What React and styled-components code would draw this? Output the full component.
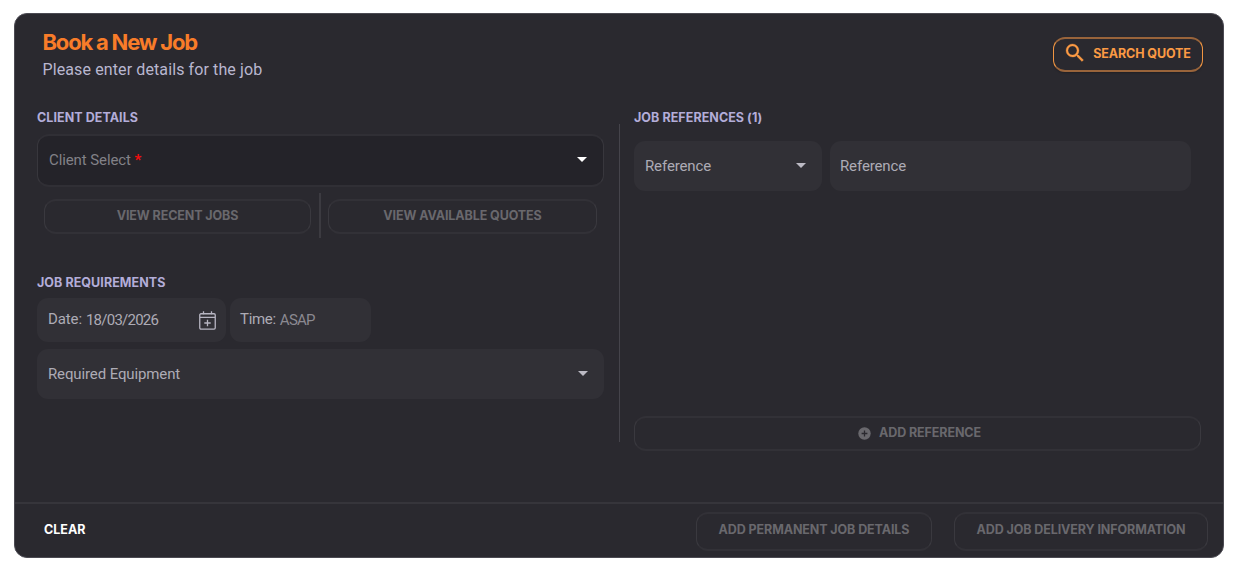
import React from 'react';
import styled, { createGlobalStyle } from 'styled-components';

const GlobalStyle = createGlobalStyle`
  * { box-sizing: border-box; }
  body {
    margin: 0;
    background: #fff;
    font-family: Roboto, "Liberation Sans", sans-serif;
  }
  button { cursor: pointer; }
`;

const Card = styled.main`
  display: flex;
  flex-direction: column;
  width: 1210px;
  height: 545px;
  margin: 13px 0 0 14px;
  background: #2a292f;
  border: 1px solid #4b4a52;
  border-radius: 13px;
`;

const Header = styled.header`
  display: flex;
  justify-content: space-between;
  align-items: flex-start;
  height: 96px;
  padding: 16px 20px 0 27.5px;
`;

const Title = styled.h1`
  margin: 0;
  font: 700 22px/24px Inter, "Liberation Sans", sans-serif;
  letter-spacing: -1.2px;
  color: #f87c29;
`;

const Subtitle = styled.p`
  margin: 5px 0 0;
  font-size: 16px;
  line-height: 22px;
  letter-spacing: 0.11px;
  color: #b9b7cf;
`;

const OutlineButton = styled.button`
  display: flex;
  align-items: center;
  justify-content: center;
  gap: ${(p) => p.$gap || 8}px;
  flex: none;
  width: ${(p) => p.$width}px;
  height: ${(p) => p.$height || 35}px;
  padding: 0 0 ${(p) => p.$lift ?? 1}px ${(p) => p.$inset || 0}px;
  background: transparent;
  border-style: solid;
  border-width: 2px 1px;
  border-color: ${(p) => (p.$accent ? '#99643b #f09542' : '#323137 #3a393f')};
  border-radius: 12px;
  box-shadow: ${(p) => (p.$accent ? '0 1px 2px rgba(0, 0, 0, 0.25)' : 'none')};
  font: 700 12.5px/16px Inter, "Liberation Sans", sans-serif;
  letter-spacing: -0.1px;
  white-space: nowrap;
  color: ${(p) => (p.$accent ? '#fb9a44' : '#69686d')};
`;

const SearchButton = styled(OutlineButton)`
  margin-top: 7px;

  svg { margin: -2px 0 0 -2px; }
`;

const Body = styled.div`
  display: flex;
  height: 392px;
  padding-left: 22px;
`;

const LeftColumn = styled.section`
  display: flex;
  flex-direction: column;
  width: 567px;
`;

const ColumnRule = styled.div`
  width: 1px;
  height: 318px;
  margin: 14px 14px 0 15px;
  background: #45444b;
`;

const RightColumn = styled.section`
  display: flex;
  flex-direction: column;
  width: 567px;
`;

const SectionLabel = styled.h2`
  margin: 0;
  padding-top: ${(p) => p.$top || 0}px;
  font: 700 12.5px/16px Inter, "Liberation Sans", sans-serif;
  letter-spacing: 0.06px;
  color: #b3add9;
`;

const ClientSelect = styled.div`
  display: flex;
  align-items: center;
  justify-content: space-between;
  height: 53px;
  margin-top: 8px;
  padding: 0 16px 2px 11px;
  background: #242329;
  border-style: solid;
  border-width: 2px 1px;
  border-color: #302f35 #38373d;
  border-radius: 12px;
  font-size: 15px;
  letter-spacing: -0.1px;
  color: #828187;
`;

const Required = styled.span`
  color: #f30d0d;
  font-weight: 700;
`;

const QuickActions = styled.div`
  display: flex;
  align-items: center;
  height: 45px;
  margin: 6px 7px 0;
`;

const QuickButton = styled(OutlineButton)`
  margin-top: 1px;
`;

const QuickRule = styled.div`
  width: 2px;
  height: 45px;
  margin: 0 7px 0 8px;
  background: #3c3b41;
`;

const FieldRow = styled.div`
  display: flex;
  gap: ${(p) => p.$gap}px;
  margin-top: ${(p) => p.$top}px;
`;

const Field = styled.div`
  display: flex;
  align-items: center;
  gap: 4px;
  width: ${(p) => p.$width}px;
  height: ${(p) => p.$height || 50}px;
  padding: 0 ${(p) => p.$right ?? 16}px 0 ${(p) => p.$left ?? 11}px;
  background: #313036;
  border-radius: 11px;
  font-size: 15px;
  line-height: 18px;
  letter-spacing: -0.12px;
  color: #adabb5;
`;

const Equipment = styled(Field)`
  margin-top: 7px;
`;

const FieldText = styled.span`
  flex: ${(p) => (p.$grow ? 1 : 'none')};
  padding-bottom: ${(p) => p.$lift || 0}px;
  letter-spacing: ${(p) => (p.$tracking ? `${p.$tracking}px` : 'inherit')};
  color: ${(p) => (p.$muted ? '#8b8991' : 'inherit')};
`;

const AddReference = styled.div`
  margin-top: 225px;
`;

const Footer = styled.footer`
  display: flex;
  align-items: center;
  flex: 1;
  gap: 22px;
  padding: 1px 15px 0 29px;
  border-top: 2px solid #36353b;
`;

const ClearButton = styled.button`
  margin-right: auto;
  padding: 0 0 3px;
  background: none;
  border: 0;
  font: 700 12.5px/16px Inter, "Liberation Sans", sans-serif;
  letter-spacing: 0;
  color: #fff;
`;

const CaretSvg = styled.svg`
  flex: none;
  margin-bottom: ${(p) => p.$lift || 0}px;
`;

const Caret = ({ color = '#bcbac4', lift = 1 }) => (
  <CaretSvg $lift={lift} width="10" height="5" viewBox="0 0 10 5">
    <path d="M0 0h10L5 5z" fill={color} />
  </CaretSvg>
);

const SearchIcon = () => (
  <svg width="24" height="24" viewBox="0 0 24 24" fill="#fb9a44" stroke="#fb9a44" strokeWidth="0.3">
    <path d="M15.5 14h-.79l-.28-.27A6.47 6.47 0 0 0 16 9.5 6.5 6.5 0 1 0 9.5 16c1.61 0 3.09-.59 4.23-1.57l.27.28v.79l5 4.99L20.49 19zm-6 0C7.01 14 5 11.99 5 9.5S7.01 5 9.5 5 14 7.01 14 9.5 11.99 14 9.5 14" />
  </svg>
);

const CalendarIcon = () => (
  <svg width="17" height="19" viewBox="0 0 17 19" fill="none" stroke="#b7b5c2">
    <rect x="0.75" y="2.75" width="15.5" height="15.3" rx="1.2" strokeWidth="1.3" />
    <path d="M1 6.3h15M4.5 0.3v3M12.5 0.3v3M8.5 8.8v6.4M5.3 12h6.4" strokeWidth="1.3" />
  </svg>
);

const PlusIcon = () => (
  <svg width="13" height="13" viewBox="0 0 13 13">
    <circle cx="6.5" cy="6.5" r="6.2" fill="#69686d" />
    <path d="M6.5 3.6v5.8M3.6 6.5h5.8" stroke="#2a292f" strokeWidth="1.3" />
  </svg>
);

export default function App() {
  return (
    <>
      <GlobalStyle />
      <Card>
        <Header>
          <div>
            <Title>Book a New Job</Title>
            <Subtitle>Please enter details for the job</Subtitle>
          </div>
          <SearchButton $accent $width={150} $gap={6}>
            <SearchIcon />
            SEARCH QUOTE
          </SearchButton>
        </Header>
        <Body>
          <LeftColumn>
            <SectionLabel>CLIENT DETAILS</SectionLabel>
            <ClientSelect>
              <span>
                Client Select <Required>*</Required>
              </span>
              <Caret color="#fff" lift={0} />
            </ClientSelect>
            <QuickActions>
              <QuickButton $width={267}>VIEW RECENT JOBS</QuickButton>
              <QuickRule />
              <QuickButton $width={269}>VIEW AVAILABLE QUOTES</QuickButton>
            </QuickActions>
            <SectionLabel $top={37}>JOB REQUIREMENTS</SectionLabel>
            <FieldRow $gap={4} $top={7}>
              <Field $width={189} $height={44} $right={10}>
                <FieldText $lift={2}>Date:</FieldText>
                <FieldText $grow $tracking={-0.75}>18/03/2026</FieldText>
                <CalendarIcon />
              </Field>
              <Field $width={141} $height={44} $left={10}>
                <FieldText $lift={2} $tracking={-0.3}>Time:</FieldText>
                <FieldText $muted $tracking={-0.75}>ASAP</FieldText>
              </Field>
            </FieldRow>
            <Equipment $width={567}>
              <FieldText $grow>Required Equipment</FieldText>
              <Caret />
            </Equipment>
          </LeftColumn>
          <ColumnRule />
          <RightColumn>
            <SectionLabel>JOB REFERENCES (1)</SectionLabel>
            <FieldRow $gap={8} $top={15}>
              <Field $width={188}>
                <FieldText $grow>Reference</FieldText>
                <Caret />
              </Field>
              <Field $width={361} $left={10}>
                <FieldText>Reference</FieldText>
              </Field>
            </FieldRow>
            <AddReference>
              <OutlineButton $width={567} $inset={4}>
                <PlusIcon />
                ADD REFERENCE
              </OutlineButton>
            </AddReference>
          </RightColumn>
        </Body>
        <Footer>
          <ClearButton>CLEAR</ClearButton>
          <OutlineButton $width={236} $height={39} $lift={3}>ADD PERMANENT JOB DETAILS</OutlineButton>
          <OutlineButton $width={254} $height={39} $lift={3}>ADD JOB DELIVERY INFORMATION</OutlineButton>
        </Footer>
      </Card>
    </>
  );
}
